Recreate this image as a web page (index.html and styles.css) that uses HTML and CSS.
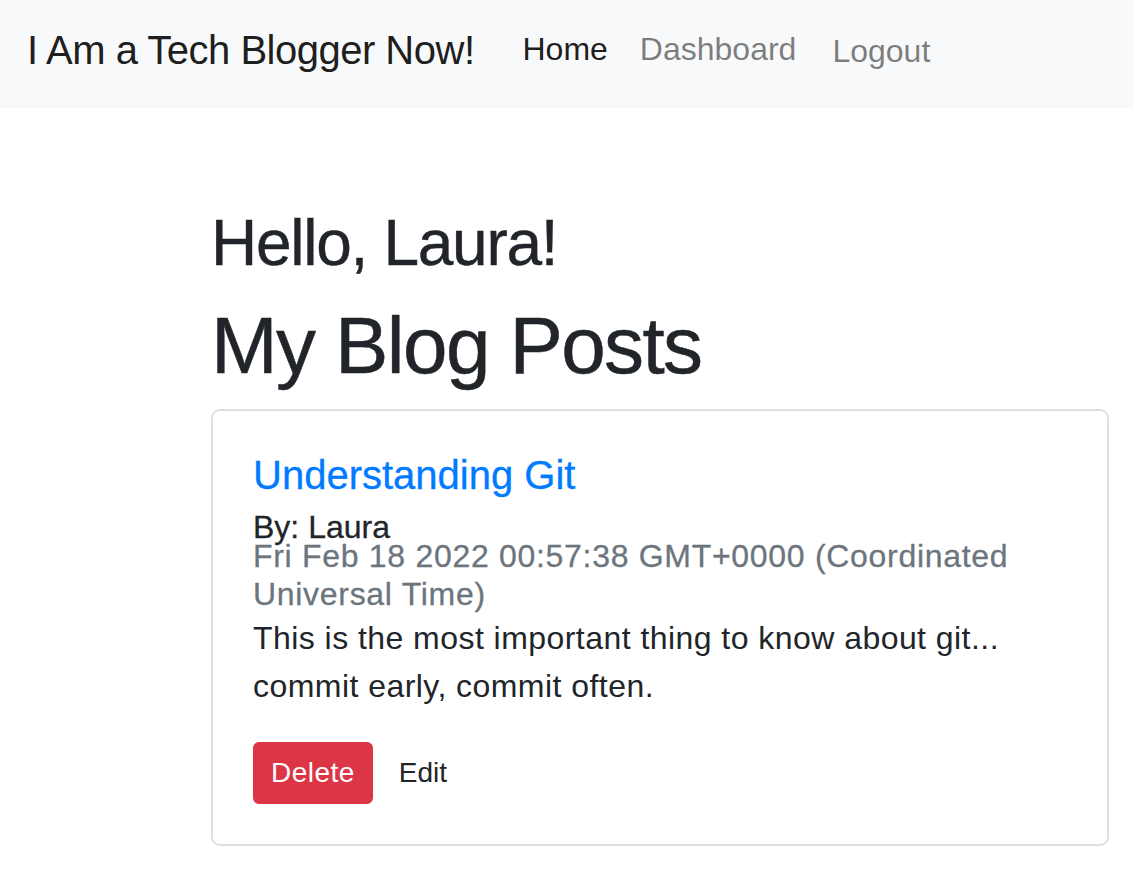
FILE: index.html
```html
<!DOCTYPE html>
<html lang="en">
<head>
<meta charset="utf-8">
<title>I Am a Tech Blogger Now!</title>
<link rel="stylesheet" href="styles.css">
</head>
<body>
<nav class="navbar">
  <a class="brand" href="#">I Am a Tech Blogger Now!</a>
  <ul class="nav">
    <li><a class="nav-link active" href="#">Home</a></li>
    <li><a class="nav-link" href="#">Dashboard</a></li>
    <li><a class="nav-link logout" href="#">Logout</a></li>
  </ul>
</nav>
<main class="main">
  <h2 class="greeting">Hello, Laura!</h2>
  <h1 class="page-title">My Blog Posts</h1>
  <div class="card">
    <div class="card-body">
      <h5 class="post-title"><a href="#">Understanding Git</a></h5>
      <h6 class="author">By: Laura</h6>
      <h6 class="date">Fri Feb 18 2022 00:57:38 GMT+0000 (Coordinated Universal Time)</h6>
      <p class="post-text">This is the most important thing to know about git... commit early, commit often.</p>
      <div class="actions"><button class="btn btn-danger">Delete</button> <a class="btn btn-link" href="#">Edit</a></div>
    </div>
  </div>
</main>
</body>
</html>
```
FILE: styles.css
```css
* { box-sizing: border-box; }
html, body { margin: 0; padding: 0; }
body {
  font-family: "Liberation Sans", Arial, sans-serif;
  color: #212529;
  background: #fff;
  font-size: 32px;
  line-height: 1.5;
}
a { text-decoration: none; }

.navbar {
  height: 108px;
  background: #f8f9fa;
  display: flex;
  align-items: center;
  padding: 0 0 8px 27px;
}
.brand {
  font-size: 40px;
  line-height: 60px;
  color: rgba(0,0,0,.9);
  letter-spacing: -0.5px;
  margin-right: 32px;
}
.nav {
  list-style: none;
  margin: 0;
  padding: 0;
  display: flex;
}
.nav-link {
  display: block;
  padding: 0 16px;
  font-size: 32px;
  line-height: 48px;
  color: rgba(0,0,0,.5);
  margin-bottom: 3px;
}
.nav-link.active { color: rgba(0,0,0,.9); }
.nav-link.logout { margin: 2px 0 0 4px; }

.main {
  margin-left: 211px;
  width: 898px;
  padding-top: 97px;
  padding-bottom: 20px;
}
.greeting {
  margin: 0 0 16px;
  font-size: 64px;
  line-height: 1.2;
  font-weight: 400;
  letter-spacing: -0.02em;
  -webkit-text-stroke: 0.4px currentColor;
}
.page-title {
  margin: 0 0 15px;
  font-size: 80px;
  line-height: 1.2;
  font-weight: 400;
  letter-spacing: -0.02em;
  -webkit-text-stroke: 0.5px currentColor;
}
.card {
  border: 2px solid #dfdfdf;
  border-radius: 9px;
  background: #fff;
}
.card-body { padding: 40px; }
.post-title {
  margin: 0 0 18px;
  font-size: 40px;
  line-height: 1.2;
  font-weight: 400;
  -webkit-text-stroke: 0.3px currentColor;
}
.post-title a { color: #007bff; }
.author {
  margin: 0;
  font-size: 32px;
  line-height: 20px;
  font-weight: 400;
  color: #212529;
  -webkit-text-stroke: 0.3px currentColor;
}
.date {
  margin: 0;
  font-size: 32px;
  line-height: 1.2;
  font-weight: 400;
  color: #6c757d;
  letter-spacing: 0.7px;
  -webkit-text-stroke: 0.3px currentColor;
}
.post-text {
  margin: 0 0 32px;
  font-size: 32px;
  line-height: 48px;
  letter-spacing: 0.45px;
}
.actions { font-size: 28px; line-height: 42px; }
.btn {
  display: inline-block;
  font-family: inherit;
  font-size: 28px;
  line-height: 42px;
  padding: 8px 16px;
  border: 2px solid transparent;
  border-radius: 6px;
  vertical-align: middle;
  cursor: pointer;
}
.btn-danger {
  background: #dc3545;
  color: #fff;
  border-color: #dc3545;
  letter-spacing: 0.5px;
}
.btn-link { color: #212529; background: transparent; }
```
